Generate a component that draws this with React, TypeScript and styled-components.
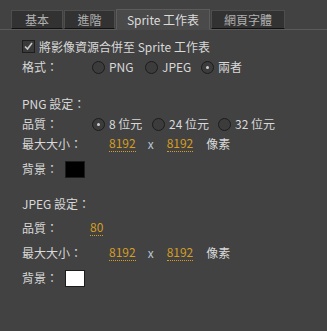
import styled, { createGlobalStyle } from "styled-components";

const GlobalStyle = createGlobalStyle`
  html, body {
    margin: 0;
    padding: 0;
    background: #424242;
  }
`;

const Panel = styled.div`
  width: 327px;
  height: 331px;
  background: #424242;
  font-family: "Noto Sans CJK TC", "Liberation Sans", sans-serif;
  font-size: 12px;
  color: #d8d8d8;
  overflow: hidden;
`;

const TabBar = styled.div`
  display: flex;
  align-items: flex-end;
  padding: 10px 0 0 11px;
  height: 19px;
  border-bottom: 1px solid #5a5a5a;
`;

const Tab = styled.div<{ $active?: boolean; $width: number }>`
  display: flex;
  align-items: center;
  justify-content: center;
  box-sizing: border-box;
  height: ${(p) => (p.$active ? "21px" : "19px")};
  width: ${(p) => p.$width}px;
  margin-right: 1px;
  margin-bottom: ${(p) => (p.$active ? "-1px" : "0")};
  background: ${(p) => (p.$active ? "#4a4a4a" : "#323232")};
  border: 1px solid ${(p) => (p.$active ? "#5c5c5c" : "#4e4e4e")};
  border-bottom: ${(p) => (p.$active ? "1px solid #4a4a4a" : "1px solid #111")};
  color: ${(p) => (p.$active ? "#dcdcdc" : "#b0b0b0")};
  font-size: 12px;
  line-height: 1;
`;

const Form = styled.div`
  display: flex;
  flex-direction: column;
  padding-left: 22px;
`;

const Row = styled.div<{ $top: number; $h?: number }>`
  display: flex;
  align-items: center;
  height: ${(p) => p.$h ?? 20}px;
  margin-top: ${(p) => p.$top}px;
  line-height: 1;
  white-space: pre;
`;

const Label = styled.div<{ $w?: number }>`
  width: ${(p) => (p.$w ? `${p.$w}px` : "auto")};
  flex-shrink: 0;
  white-space: nowrap;
`;

const CheckBox = styled.span`
  box-sizing: border-box;
  width: 13px;
  height: 13px;
  margin-right: 4px;
  border: 1px solid #1e1e1e;
  background: #3a3a3a;
  display: flex;
  align-items: center;
  justify-content: center;
`;

const RadioItem = styled.div<{ $w: number }>`
  display: flex;
  align-items: center;
  width: ${(p) => p.$w}px;
  white-space: nowrap;
`;

const RadioCircle = styled.span<{ $on?: boolean }>`
  box-sizing: border-box;
  width: 13px;
  height: 13px;
  border-radius: 50%;
  border: 1px solid #1c1c1c;
  background: #3c3c3c;
  margin-right: 4px;
  display: flex;
  align-items: center;
  justify-content: center;

  &::after {
    content: "";
    display: ${(p) => (p.$on ? "block" : "none")};
    width: 3px;
    height: 3px;
    border-radius: 50%;
    background: #cfcfcf;
  }
`;

const Value = styled.span`
  color: #d69d22;
  border-bottom: 1px dotted #d69d22;
  padding-bottom: 2px;
`;

const Times = styled.span`
  margin: 0 13px 0 12px;
  color: #b8c4d4;
`;

const Unit = styled.span`
  margin-left: 13px;
`;

const Swatch = styled.span<{ $color: string }>`
  box-sizing: border-box;
  width: 20px;
  height: 17px;
  border: 1px solid #1c1c1c;
  background: ${(p) => p.$color};
`;

const Check = () => (
  <svg width="11" height="11" viewBox="0 0 11 11">
    <path d="M2 5.5 L4.5 8 L9 2" fill="none" stroke="#c8c8c8" strokeWidth="1.6" />
  </svg>
);

const SizeRow = ({ top }: { top: number }) => (
  <Row $top={top}>
    <Label $w={87}>最大大小：</Label>
    <Value>8192</Value>
    <Times>x</Times>
    <Value>8192</Value>
    <Unit>像素</Unit>
  </Row>
);

export default function App() {
  return (
    <>
      <GlobalStyle />
      <Panel>
        <TabBar>
          <Tab $width={52}>基本</Tab>
          <Tab $width={51}>進階</Tab>
          <Tab $active $width={94}>Sprite 工作表</Tab>
          <Tab $width={74}>網頁字體</Tab>
        </TabBar>
        <Form>
          <Row $top={7} $h={19}>
            <CheckBox>
              <Check />
            </CheckBox>
            將影像資源合併至 Sprite 工作表
          </Row>
          <Row $top={1}>
            <Label $w={70}>格式：</Label>
            <RadioItem $w={53}>
              <RadioCircle />
              PNG
            </RadioItem>
            <RadioItem $w={56}>
              <RadioCircle />
              JPEG
            </RadioItem>
            <RadioItem $w={60}>
              <RadioCircle $on />
              兩者
            </RadioItem>
          </Row>

          <Row $top={17}>PNG 設定：</Row>
          <Row $top={0}>
            <Label $w={70}>品質：</Label>
            <RadioItem $w={60}>
              <RadioCircle $on />8 位元
            </RadioItem>
            <RadioItem $w={66}>
              <RadioCircle />
              24 位元
            </RadioItem>
            <RadioItem $w={60}>
              <RadioCircle />
              32 位元
            </RadioItem>
          </Row>
          <SizeRow top={0} />
          <Row $top={4} $h={22}>
            <Label $w={43}>背景：</Label>
            <Swatch $color="#000" />
          </Row>

          <Row $top={14}>JPEG 設定：</Row>
          <Row $top={4}>
            <Label $w={68}>品質：</Label>
            <Value>80</Value>
          </Row>
          <SizeRow top={5} />
          <Row $top={4} $h={22}>
            <Label $w={43}>背景：</Label>
            <Swatch $color="#fff" />
          </Row>
        </Form>
      </Panel>
    </>
  );
}
